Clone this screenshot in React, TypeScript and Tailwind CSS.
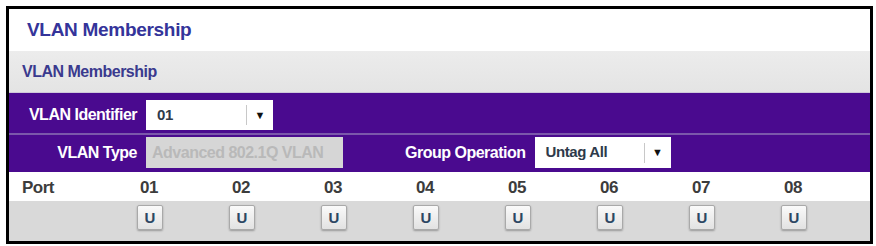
const PORTS = ['01', '02', '03', '04', '05', '06', '07', '08'];

function SelectBox({ value, width }: { value: string; width: string }) {
  return (
    <div className={`${width} bg-white flex items-center`}>
      <span className="pl-[11px] text-[15px] tracking-[-0.4px] font-bold text-[#2e3a4a] flex-1">{value}</span>
      <span className="w-px h-[20px] bg-[#c8c8c8]" />
      <span className="w-[26px] text-center text-[11px] text-[#111] leading-none">▼</span>
    </div>
  );
}

export default function App() {
  return (
    <div className="w-[876px] h-[246px] bg-white pt-[6px] pl-[6px]" style={{ fontFamily: '"Liberation Sans", Arial, sans-serif' }}>
      <div className="w-[867px] h-[238px] border-[3px] border-black flex flex-col">
        {/* page title */}
        <div className="h-[42px] flex items-center pl-[18px] pt-[1px] bg-white">
          <h1 className="text-[19px] tracking-[-0.3px] font-bold text-[#34349a]">VLAN Membership</h1>
        </div>

        {/* section header */}
        <div className="h-[42px] flex items-center pl-[13px] bg-gradient-to-b from-[#ececec] to-[#e4e4e4] border-b border-[#cfc8da]">
          <h2 className="text-[16px] tracking-[-0.5px] font-bold text-[#3a3a8e]">VLAN Membership</h2>
        </div>

        {/* identifier row */}
        <div className="h-[40px] bg-[#4a0a8f] flex items-start pt-[7px]">
          <div className="w-[128px] h-[30px] flex items-center justify-end text-[16px] tracking-[-0.5px] font-bold text-white">VLAN Identifier</div>
          <div className="ml-[9px]">
            <SelectBox value="01" width="w-[127px] h-[30px]" />
          </div>
        </div>
        <div className="h-[2px] bg-[#7b58ab]" />

        {/* type row */}
        <div className="h-[37px] bg-[#4a0a8f] flex items-start pt-[2px]">
          <div className="w-[128px] h-[31px] flex items-center justify-end text-[16px] tracking-[-0.5px] font-bold text-white">VLAN Type</div>
          <div className="ml-[9px] w-[197px] h-[31px] bg-[#d6d6d6] flex items-center pl-[6px] text-[16px] tracking-[-0.5px] font-bold text-[#b9b9b9]">
            Advanced 802.1Q VLAN
          </div>
          <div className="ml-[62px] h-[31px] flex items-center text-[16px] tracking-[-0.5px] font-bold text-white">Group Operation</div>
          <div className="ml-[9px]">
            <SelectBox value="Untag All" width="w-[136px] h-[31px]" />
          </div>
        </div>

        {/* port header */}
        <div className="h-[29px] bg-white grid grid-cols-[94px_repeat(8,92px)] items-center pt-[3px] text-[17px] tracking-[-0.5px] font-bold text-[#3c3c3c]">
          <span className="pl-[13px]">Port</span>
          {PORTS.map(p => (
            <span key={p} className="text-center">{p}</span>
          ))}
        </div>

        {/* membership buttons */}
        <div className="flex-1 bg-[#d9d9d9] grid grid-cols-[94px_repeat(8,92px)] items-start pt-[4px]">
          <span />
          {PORTS.map(p => (
            <div key={p} className="flex justify-center pl-[2px]">
              <button className="w-[26px] h-[25px] rounded-[2px] border border-[#a9a9a9] bg-gradient-to-b from-[#fafafa] to-[#e2e2e2] shadow-[0_1px_2px_rgba(0,0,0,0.3)] text-[15px] font-bold text-[#2c4763] leading-none">
                U
              </button>
            </div>
          ))}
        </div>
      </div>
    </div>
  );
}
